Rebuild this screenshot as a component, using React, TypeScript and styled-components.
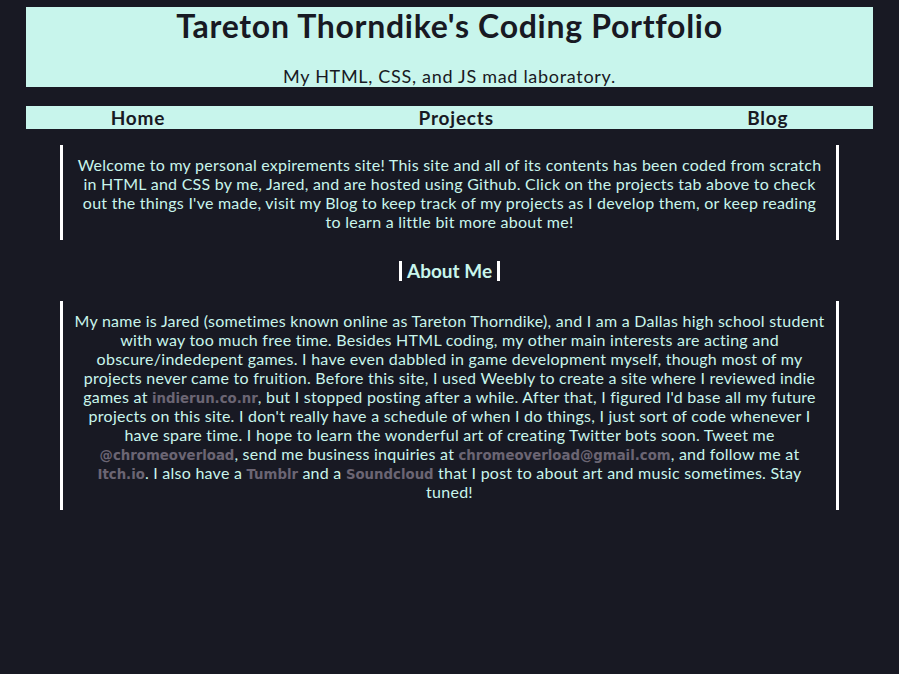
import React from "react";
import styled, { createGlobalStyle } from "styled-components";

const GlobalStyle = createGlobalStyle`
  html, body {
    margin: 0;
    padding: 0;
    background: #181923;
  }
  body {
    padding: 7px 8px 8px;
    font-family: "Lato", "DejaVu Sans", sans-serif;
  }
`;

const Page = styled.div`
  display: flex;
  flex-direction: column;
  align-items: center;
`;

const Header = styled.header`
  width: 96%;
  height: 80px;
  background: #c8f5ec;
  color: #181923;
  display: flex;
  flex-direction: column;
  align-items: center;
  box-sizing: border-box;
`;

const Title = styled.h1`
  margin: 0;
  font-size: 32px;
  line-height: 38px;
  font-weight: 700;
  letter-spacing: 0.7px;
`;

const Subtitle = styled.p`
  margin: 22px 0 0;
  font-size: 18px;
  line-height: 18px;
  letter-spacing: 0.7px;
`;

const Nav = styled.nav`
  width: 96%;
  height: 23px;
  margin-top: 19px;
  background: #c8f5ec;
  display: flex;
  justify-content: space-between;
  align-items: flex-end;
  padding: 0 85px;
  box-sizing: border-box;
`;

const NavItem = styled.span`
  color: #181923;
  font-size: 19px;
  font-weight: 700;
  line-height: 22px;
  letter-spacing: 0.8px;
`;

const Block = styled.section<{ $gap: number; $pad: number }>`
  align-self: stretch;
  margin: ${(p) => p.$gap}px 52px 0;
  border-left: 3px solid #ffffff;
  border-right: 3px solid #ffffff;
  padding: 10px ${(p) => p.$pad}px 9px;
  color: #c8f5ec;
  font-size: 16px;
  line-height: 19px;
  letter-spacing: 0.25px;
  text-align: center;
`;

const Heading = styled.h2`
  margin: 21px 0 0;
  padding: 0 5px;
  border-left: 3px solid #ffffff;
  border-right: 3px solid #ffffff;
  color: #c8f5ec;
  font-size: 19px;
  line-height: 20px;
  font-weight: 700;
`;

const Link = styled.a`
  color: #6b6573;
  font-family: "DejaVu Sans", sans-serif;
  font-weight: 700;
  font-size: 13.3px;
  line-height: 15px;
  letter-spacing: 0;
  text-decoration: none;
`;

export default function App() {
  return (
    <>
      <GlobalStyle />
      <Page>
        <Header>
          <Title>Tareton Thorndike's Coding Portfolio</Title>
          <Subtitle>My HTML, CSS, and JS mad laboratory.</Subtitle>
        </Header>
        <Nav>
          <NavItem>Home</NavItem>
          <NavItem>Projects</NavItem>
          <NavItem>Blog</NavItem>
        </Nav>
        <Block $gap={16} $pad={12}>
          Welcome to my personal expirements site! This site and all of its contents has been
          coded from scratch in HTML and CSS by me, Jared, and are hosted using Github. Click on
          the projects tab above to check out the things I've made, visit my Blog to keep track of
          my projects as I develop them, or keep reading to learn a little bit more about me!
        </Block>
        <Heading>About Me</Heading>
        <Block $gap={20} $pad={10}>
          My name is Jared (sometimes known online as Tareton Thorndike), and I am a Dallas high
          school student with way too much free time. Besides HTML coding, my other main interests
          are acting and obscure/indedepent games. I have even dabbled in game development myself,
          though most of my projects never came to fruition. Before this site, I used Weebly to
          create a site where I reviewed indie games at <Link>indierun.co.nr</Link>, but I stopped
          posting after a while. After that, I figured I'd base all my future projects on this site.
          I don't really have a schedule of when I do things, I just sort of code whenever I have
          spare time. I hope to learn the wonderful art of creating Twitter bots soon. Tweet me{" "}
          <Link>@chromeoverload</Link>, send me business inquiries at{" "}
          <Link>chromeoverload@gmail.com</Link>, and follow me at <Link>Itch.io</Link>. I also have
          a <Link>Tumblr</Link> and a <Link>Soundcloud</Link> that I post to about art and music
          sometimes. Stay tuned!
        </Block>
      </Page>
    </>
  );
}
